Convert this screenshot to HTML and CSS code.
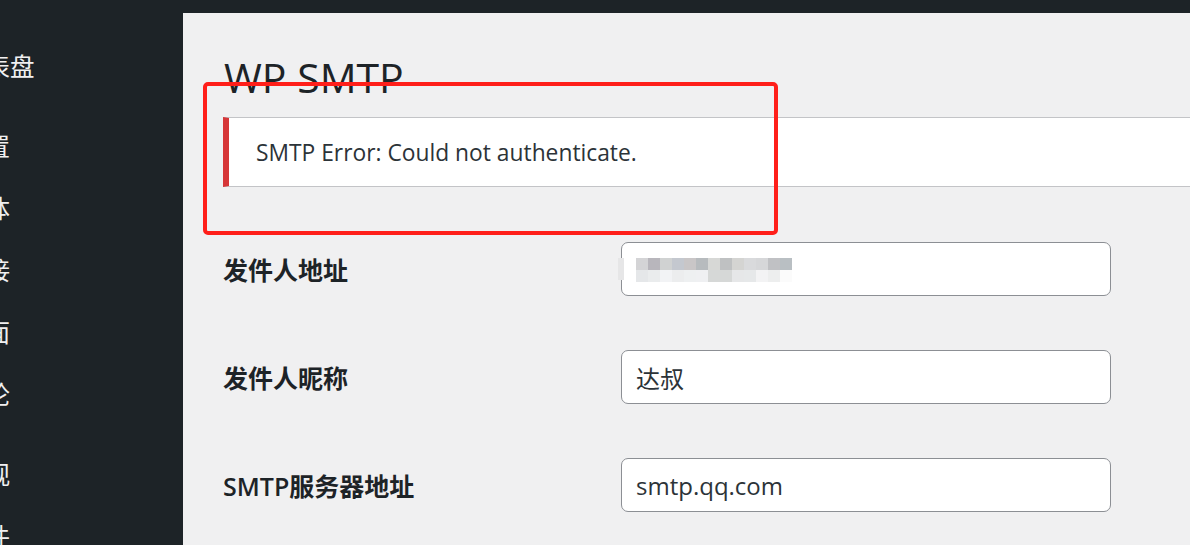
FILE: index.html
```html
<!DOCTYPE html>
<html lang="zh">
<head>
<meta charset="utf-8">
<title>WP SMTP</title>
<link rel="stylesheet" href="styles.css">
</head>
<body>
<div class="topbar"></div>
<div class="layout">
  <nav class="sidebar">
    <ul class="menu">
      <li class="item">仪表盘</li>
      <li class="sep"></li>
      <li class="item">设置</li>
      <li class="item">媒体</li>
      <li class="item">链接</li>
      <li class="item">页面</li>
      <li class="item">评论</li>
      <li class="sep"></li>
      <li class="item">外观</li>
      <li class="item">插件</li>
    </ul>
  </nav>
  <main class="content">
    <h1 class="title">WP SMTP</h1>
    <div class="notice"><p>SMTP Error: Could not authenticate.</p></div>
    <div class="annot"></div>
    <div class="form">
      <div class="row">
        <label class="label">发件人地址</label>
        <div class="input mosaic-input">
          <div class="mosaic">
            <span class="edge"></span>
            <div class="cells">
              <i class="c1"></i><i class="c2"></i><i class="c3"></i><i class="c4"></i><i class="c5"></i><i class="c6"></i><i class="c7"></i><i class="c8"></i><i class="c9"></i><i class="c10"></i><i class="c11"></i><i class="c12"></i><i class="c13"></i>
              <i class="d1"></i><i class="d2"></i><i class="d3"></i><i class="d4"></i><i class="d5"></i><i class="d6"></i><i class="d7"></i><i class="d8"></i><i class="d9"></i><i class="d10"></i><i class="d11"></i><i class="d12"></i><i class="d13"></i>
            </div>
          </div>
        </div>
      </div>
      <div class="row">
        <label class="label">发件人昵称</label>
        <div class="input">达叔</div>
      </div>
      <div class="row">
        <label class="label"><span class="latin">SMTP</span>服务器地址</label>
        <div class="input">smtp.qq.com</div>
      </div>
    </div>
  </main>
</div>
</body>
</html>
```

FILE: styles.css
```css
* { box-sizing: border-box; }
html, body { margin: 0; padding: 0; }
body {
  width: 1190px;
  height: 545px;
  overflow: hidden;
  background: #f0f0f1;
  font-family: "Open Sans", "Noto Sans CJK SC", sans-serif;
  color: #1d2327;
}
.topbar {
  height: 13px;
  background: #1d2327;
}
.layout {
  display: flex;
  height: 532px;
}
.sidebar {
  width: 183px;
  flex: none;
  background: #1d2327;
  overflow: hidden;
}
.menu {
  list-style: none;
  margin: 0;
  padding: 22px 0 0 0;
}
.menu .item {
  height: 62px;
  line-height: 62px;
  margin-left: -39px;
  font-size: 24.5px;
  color: #f0f0f1;
  font-family: "Noto Sans CJK SC", sans-serif;
  white-space: nowrap;
}
.menu .sep { height: 18px; }
.content {
  flex: 1;
  position: relative;
  padding: 0 0 0 40px;
  min-width: 0;
}
.title {
  margin: 0;
  padding: 34px 0 0 1px;
  height: 104px;
  font-size: 41px;
  font-weight: 400;
  line-height: 60px;
  color: #1d2327;
}
.notice {
  height: 70px;
  background: #fff;
  border-top: 1px solid #c3c4c7;
  border-bottom: 1px solid #c3c4c7;
  border-left: 6px solid #d63638;
  margin-right: -10px;
  display: flex;
  align-items: center;
  padding-left: 27px;
}
.notice p {
  margin: 0;
  font-size: 22.8px;
  color: #2c3338;
}
.annot {
  position: absolute;
  left: 20px;
  top: 69px;
  width: 575px;
  height: 153px;
  border: 4px solid #ff1f1a;
  border-radius: 5px;
}
.form {
  display: flex;
  flex-direction: column;
  gap: 54px;
  padding-top: 55px;
}
.row {
  display: grid;
  grid-template-columns: 398px 490px;
  align-items: center;
}
.label {
  font-family: "Noto Sans CJK SC", sans-serif;
  font-weight: 700;
  font-size: 25px;
  color: #1d2327;
}
.label .latin {
  font-family: "Open Sans", sans-serif;
  font-weight: 600;
}
.input {
  height: 54px;
  background: #fff;
  border: 1px solid #8c8f94;
  border-radius: 7px;
  display: flex;
  align-items: center;
  padding-left: 14px;
  font-size: 24px;
  color: #2c3338;
  font-family: "Open Sans", "Noto Sans CJK SC", sans-serif;
}
.mosaic-input { padding-left: 0; }
.mosaic {
  display: flex;
  align-items: center;
  gap: 12px;
  margin-left: -4px;
}
.edge {
  width: 6px;
  height: 22px;
  background: #e6e6e7;
}
.cells {
  display: grid;
  grid-template-columns: repeat(13, 12px);
  grid-template-rows: 12px 12px;
  margin-top: 2px;
}
.cells i { display: block; }
.c1 { background: #d4d4d6; } .c2 { background: #b8b6bc; } .c3 { background: #d0d2d2; }
.c4 { background: #c4c8cf; } .c5 { background: #c9c6c7; } .c6 { background: #b7bbbe; }
.c7 { background: #d7d8d6; } .c8 { background: #bfc1c2; } .c9 { background: #d4d4d2; }
.c10 { background: #d9dadc; } .c11 { background: #d6d7d9; } .c12 { background: #c0c1c4; }
.c13 { background: #b9bfc3; }
.d1 { background: #e5e7e9; } .d2 { background: #eaeced; } .d3 { background: #f2f3f5; }
.d4 { background: #ecedee; } .d5 { background: #eef0f1; } .d6 { background: #eff0f2; }
.d7 { background: #d6d8d7; } .d8 { background: #d6d8d7; } .d9 { background: #e6e7e8; }
.d10 { background: #e6e8e9; } .d11 { background: #f3f3f4; } .d12 { background: #edeeee; }
.d13 { background: #fbfbfb; }
```
